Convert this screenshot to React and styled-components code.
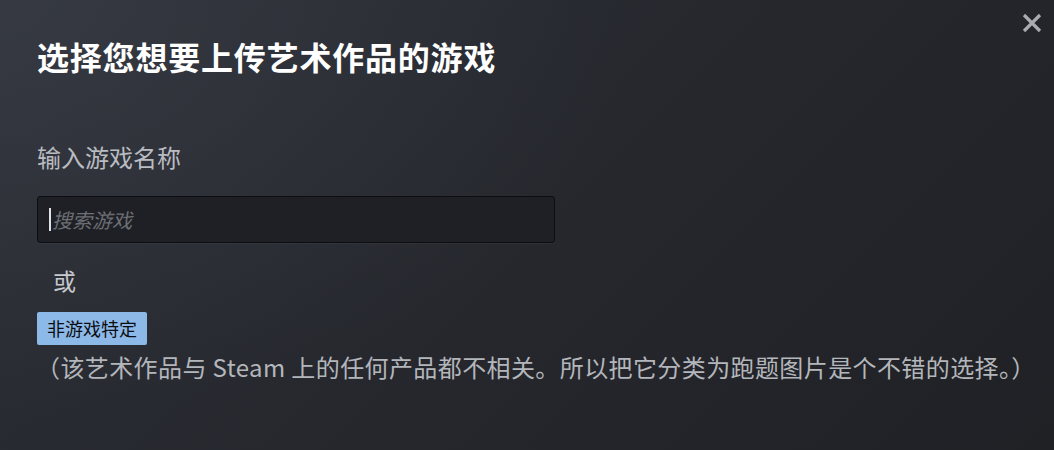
import React from "react";
import styled, { createGlobalStyle } from "styled-components";

const Global = createGlobalStyle`
  html, body { margin: 0; padding: 0; }
  body {
    width: 1054px;
    height: 450px;
    overflow: hidden;
    background: #25272d;
    font-family: "Noto Sans CJK SC", "Noto Sans", sans-serif;
  }
`;

const Dialog = styled.div`
  position: relative;
  box-sizing: border-box;
  width: 1054px;
  height: 450px;
  padding: 35px 37px 0;
  display: flex;
  flex-direction: column;
  background:
    radial-gradient(ellipse 900px 600px at 0% 0%, rgba(62, 66, 76, 0.55) 0%, rgba(62, 66, 76, 0) 70%),
    linear-gradient(135deg, #2c2f36 0%, #25272d 55%, #202125 100%);
`;

const CloseButton = styled.button`
  position: absolute;
  top: 10px;
  right: 9px;
  width: 26px;
  height: 26px;
  padding: 0;
  border: none;
  background: transparent;
  cursor: pointer;
  display: flex;
  align-items: center;
  justify-content: center;
`;

const Title = styled.h1`
  margin: 0;
  font-size: 32px;
  line-height: 42px;
  font-weight: 700;
  color: #ffffff;
  letter-spacing: 0.8px;
`;

const FieldLabel = styled.div`
  margin-top: 64px;
  font-size: 24px;
  line-height: 32px;
  color: #b9bcc1;
`;

const SearchBox = styled.div`
  margin-top: 23px;
  box-sizing: border-box;
  width: 518px;
  height: 47px;
  border: 1px solid #0c0d10;
  border-radius: 3px;
  background: #1f2025;
  display: flex;
  align-items: center;
  padding-left: 11px;
  box-shadow: 0 1px 0 rgba(255, 255, 255, 0.04);
`;

const Caret = styled.span`
  width: 2px;
  height: 23px;
  background: #dfe3e8;
  margin-right: 1px;
`;

const SearchInput = styled.input`
  flex: 1;
  border: none;
  outline: none;
  background: transparent;
  font-family: inherit;
  font-size: 20px;
  font-style: italic;
  color: #d0d3d7;
  padding: 0;
  &::placeholder {
    color: #6c6f75;
    font-style: italic;
  }
`;

const OrText = styled.div`
  margin-top: 22px;
  margin-left: 16px;
  font-size: 23px;
  line-height: 30px;
  color: #c6c9cd;
`;

const Chip = styled.button`
  align-self: flex-start;
  margin-top: 17px;
  height: 33px;
  padding: 0 10px;
  border: none;
  border-radius: 2px;
  background: #8cb9e8;
  color: #0c0d10;
  font-family: inherit;
  font-size: 18px;
  line-height: 33px;
  cursor: pointer;
`;

const Note = styled.div`
  margin-top: 4px;
  margin-left: -1px;
  font-size: 24px;
  line-height: 36px;
  letter-spacing: 0.4px;
  color: #b3b6bb;
  white-space: nowrap;
`;

export default function App() {
  return (
    <>
      <Global />
      <Dialog>
        <CloseButton aria-label="关闭">
          <svg width="22" height="22" viewBox="0 0 22 22">
            <path d="M3 3 L19 19 M19 3 L3 19" stroke="#a9abae" strokeWidth="3.2" strokeLinecap="butt" />
          </svg>
        </CloseButton>
        <Title>选择您想要上传艺术作品的游戏</Title>
        <FieldLabel>输入游戏名称</FieldLabel>
        <SearchBox>
          <Caret />
          <SearchInput placeholder="搜索游戏" />
        </SearchBox>
        <OrText>或</OrText>
        <Chip>非游戏特定</Chip>
        <Note>（该艺术作品与 Steam 上的任何产品都不相关。所以把它分类为跑题图片是个不错的选择。）</Note>
      </Dialog>
    </>
  );
}
